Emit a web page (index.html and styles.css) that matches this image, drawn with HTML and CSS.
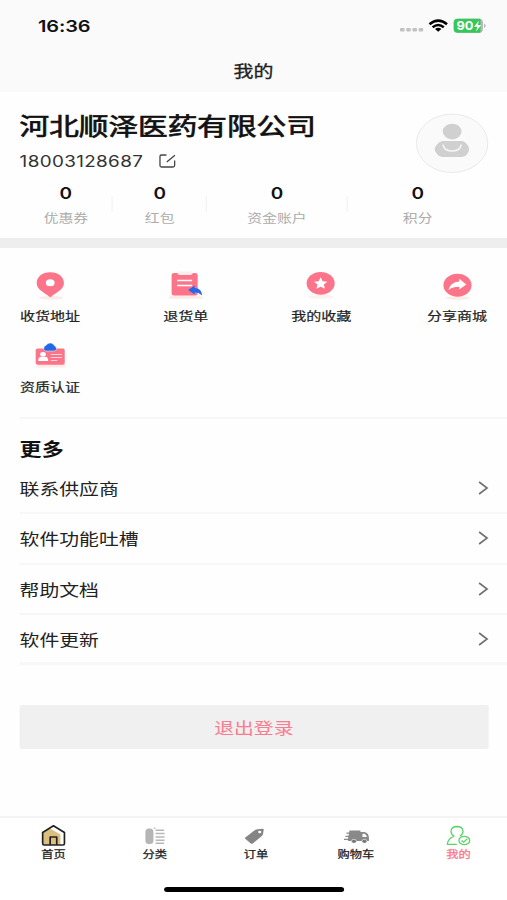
FILE: index.html
```html
<!DOCTYPE html>
<html lang="zh-CN">
<head>
<meta charset="utf-8">
<title>我的</title>
<link rel="stylesheet" href="styles.css">
</head>
<body>
<div class="app">
  <header class="top">
    <div class="status">
      <span class="time">16:36</span>
      <svg class="status-icons" viewBox="398 16 90 20" preserveAspectRatio="none">
        <g fill="#c2c2c4"><rect x="400" y="28" width="4.600" height="3.600" rx="1"/><rect x="406.200" y="28" width="4.600" height="3.600" rx="1"/><rect x="412.400" y="28" width="4.600" height="3.600" rx="1"/><rect x="418.600" y="28" width="4.600" height="3.600" rx="1"/></g>
        <g fill="none" stroke="#000" stroke-width="2.500"><path d="M429.500 24.200Q438.200 17 447 24.200"/><path d="M432.600 27.200Q438.200 22.700 443.800 27.200"/></g>
        <path d="M435 29Q438.200 26.600 441.400 29L438.200 31.800Z"/>
        <rect x="453.700" y="18.800" width="29.300" height="14" rx="4" fill="#b9b9bb"/>
        <path d="M457.700 18.800H480.500V32.800H457.700A4 4 0 0 1 453.700 28.800V22.800A4 4 0 0 1 457.700 18.800Z" fill="#34c759"/>
        <path d="M484 23.500Q487.500 25.800 484 28Z" fill="#b9b9bb"/>
        <text x="456.500" y="30" class="battery-text" textLength="17" lengthAdjust="spacingAndGlyphs">90</text>
        <path d="M479 20.500L474 26.800H477.300L476 31.500L481.200 25H477.800Z" fill="#fff"/>
      </svg>
    </div>
    <h1 class="title">我的</h1>
  </header>

  <section class="profile">
    <div class="identity">
      <div>
        <h2 class="company">河北顺泽医药有限公司</h2>
        <div class="phone"><span>18003128687</span>
          <svg class="edit" viewBox="158 153 20 16" preserveAspectRatio="none" fill="none" stroke="#444" stroke-width="1.300"><path d="M166.500 155H161.500Q160 155 160 156.500V165.500Q160 167 161.500 167H173Q174.700 167 174.700 165.500V160.500M166.800 162L175 155.200"/></svg>
        </div>
      </div>
      <svg class="avatar" viewBox="415 113 74 61" preserveAspectRatio="none"><ellipse cx="452" cy="143.300" rx="35.700" ry="29.200" fill="#fafafa" stroke="#e9e9e9"/><g fill="#d0d0d0"><ellipse cx="452" cy="131.600" rx="9.400" ry="7.800"/><path d="M442 141H462Q465 141.500 467.500 145Q470.500 149 467.500 153.500Q465 157 461 157H443Q439 157 436.500 153.500Q432.500 149 436.500 145Q439 141.500 442 141Z"/></g><path d="M442.800 144.500Q444 151 452 151Q460 151 461.200 144.500" fill="none" stroke="#f5f5f5" stroke-width="1.500"/></svg>
    </div>
    <div class="stats">
      <div class="stat"><b>0</b><span>优惠券</span></div>
      <div class="stat"><b>0</b><span>红包</span></div>
      <div class="stat wide"><b>0</b><span>资金账户</span></div>
      <div class="stat wide"><b>0</b><span>积分</span></div>
    </div>
  </section>

  <section class="services">
    <div class="service">
      <svg viewBox="28 270 44 32" preserveAspectRatio="none"><ellipse cx="50.500" cy="297.800" rx="12" ry="1.700" fill="#fdebe5"/><path d="M50 272.300C58 272.300 63.700 277 63.700 283C63.700 290 55 293 50.800 296.700Q50 297.300 49.200 296.700C45 293 36.500 290 36.500 283C36.500 277 42 272.300 50 272.300Z" fill="#fc7489"/><ellipse cx="50" cy="282.800" rx="4.400" ry="3.500" fill="#fff"/></svg>
      <span>收货地址</span>
    </div>
    <div class="service">
      <svg viewBox="163.500 270 44 32" preserveAspectRatio="none"><path d="M169 295.500H199L203.500 298.700H168Z" fill="#fdebe5"/><rect x="171" y="273" width="26" height="22.500" rx="2.500" fill="#fc7489"/><path d="M177 271.500H192V273.500Q191.500 275 189.500 275H179.500Q177.500 275 177 273.500Z" fill="#fdeeee"/><path d="M176.500 280.500H191.500M176.500 285.500H191.500" stroke="#fff" stroke-width="1.700"/><path d="M187.500 290L194 285.500V288Q201 288 201.500 295.500Q198 292.200 194 292.200V294.500Z" fill="#2468ea"/></svg>
      <span>退货单</span>
    </div>
    <div class="service">
      <svg viewBox="299 270 44 32" preserveAspectRatio="none"><ellipse cx="321" cy="296.800" rx="13" ry="1.700" fill="#fdf0ed"/><ellipse cx="320.800" cy="283.300" rx="14" ry="11.400" fill="#fc7489"/><path d="M320.800 277.300L322.800 281.200L327.500 281.700L324 284.500L325 288.800L320.800 286.700L316.600 288.800L317.600 284.500L314.100 281.700L318.800 281.200Z" fill="#fff"/></svg>
      <span>我的收藏</span>
    </div>
    <div class="service">
      <svg viewBox="435 270 44 32" preserveAspectRatio="none"><ellipse cx="458" cy="298" rx="12" ry="1.700" fill="#fdebe5"/><ellipse cx="457.700" cy="285.200" rx="14" ry="11.500" fill="#fc7489"/><path d="M448.500 290Q450.500 282 459.500 281.500V278.800L466.500 284.500L459.500 289.500V286.700Q453.500 286.500 448.500 290Z" fill="#fff"/></svg>
      <span>分享商城</span>
    </div>
    <div class="service">
      <svg viewBox="28 341 44 32" preserveAspectRatio="none"><path d="M39 364H65V367.500H36Z" fill="#fdebe5"/><rect x="35.500" y="348.500" width="29" height="16.300" rx="2" fill="#fc7489"/><path d="M46 351Q42.500 351 44 346.500Q46 345.500 47 344Q50 341.800 53 344Q54 345.500 56 347.500Q57 350.500 54 351Z" fill="#2468ea" stroke="#fff" stroke-width=".5"/><ellipse cx="42.800" cy="354.200" rx="2.800" ry="2.300" fill="#fff"/><path d="M38 361Q38 356.800 41 356.800H45Q48 356.800 48 361Z" fill="#fff"/><path d="M50.500 354.500H61.500M50.500 357.500H61.500M50.500 360.500H57" stroke="#ffd4dc" stroke-width="1.200"/></svg>
      <span>资质认证</span>
    </div>
  </section>

  <section class="more">
    <h3>更多</h3>
    <ul class="menu">
      <li><span>联系供应商</span><svg viewBox="0 0 12 16" preserveAspectRatio="none"><path d="M1.500 2L9.500 8L1.500 14"/></svg></li>
      <li><span>软件功能吐槽</span><svg viewBox="0 0 12 16" preserveAspectRatio="none"><path d="M1.500 2L9.500 8L1.500 14"/></svg></li>
      <li><span>帮助文档</span><svg viewBox="0 0 12 16" preserveAspectRatio="none"><path d="M1.500 2L9.500 8L1.500 14"/></svg></li>
      <li><span>软件更新</span><svg viewBox="0 0 12 16" preserveAspectRatio="none"><path d="M1.500 2L9.500 8L1.500 14"/></svg></li>
    </ul>
  </section>

  <button class="logout">退出登录</button>

  <footer class="bottom">
    <nav class="tabs">
      <a class="tab"><svg viewBox="38 823 31 24" preserveAspectRatio="none"><path d="M42.500 832.500L53.500 825.800L64.500 832.500V845H42.500Z" fill="#fff"/><path d="M43 833L50 828.500L60.500 834.500V845H43Z" fill="#dcbf7e"/><path d="M53.500 825.800L42.700 832.500V843.500Q42.700 845 44.200 845H63Q64.500 845 64.500 843.500V832.500ZM50.200 845V837H56.800V845" fill="none" stroke="#222" stroke-width="1.700" stroke-linejoin="round"/></svg><span>首页</span></a>
      <a class="tab"><svg viewBox="139.500 823 31 24" preserveAspectRatio="none"><rect x="145.300" y="828.500" width="8" height="15.500" rx="3.500" fill="#b5b5b5"/><path d="M155.500 830.300H164M155.500 833.600H164.500M155.500 836.900H164.500M155.500 840.200H164.500M155.500 843.300H164" stroke="#b8b8b8" stroke-width="1.500"/><circle cx="154.700" cy="828.300" r=".8" fill="#aaa"/></svg><span>分类</span></a>
      <a class="tab"><svg viewBox="241 823 31 24" preserveAspectRatio="none"><path d="M246.300 837.500L256 830Q257 829.300 259 829.200L263.500 828.700Q265 828.700 264.700 830L264 834Q263.700 835.300 262.500 836.200L254 843.200Q252.800 844.200 251.500 843.200L246.500 839Q245.500 838.200 246.300 837.500Z" fill="#858585"/><ellipse cx="260.700" cy="832" rx="1.600" ry="1.300" fill="#fff"/></svg><span>订单</span></a>
      <a class="tab cart"><svg viewBox="341 823 31 24" preserveAspectRatio="none"><path d="M350 830.500H361V832H365Q369.500 833 369.500 838V841H349Q348 841 348.500 839Z" fill="#898989"/><path d="M347 833.200H351M346 836.300H350M344.500 839.400H350" stroke="#898989" stroke-width="1.200"/><path d="M363 833.700H365Q367 834.500 367.500 837H363Z" fill="#fff"/><g fill="#777" stroke="#fff" stroke-width=".6"><ellipse cx="354.500" cy="841.300" rx="2.500" ry="2"/><ellipse cx="365" cy="841.300" rx="2.500" ry="2"/></g></svg><span>购物车</span></a>
      <a class="tab active"><svg viewBox="443 823 31 24" preserveAspectRatio="none" fill="none" stroke="#5bd267" stroke-width="1.300"><path d="M454 836.200Q450.700 834.300 450.700 831.200Q451 826.600 456.700 826.500Q462.500 826.600 462.700 831.200Q462.500 834.500 459.500 836M454 836.200Q447.500 838.500 447 844.300H456.500"/><ellipse cx="464" cy="840.500" rx="5.400" ry="4.200"/><path d="M461.200 840.500L463.400 842.200L467 838.700"/></svg><span>我的</span></a>
    </nav>
    <div class="home-bar"></div>
  </footer>
</div>
</body>
</html>
```
FILE: styles.css
```css
* { box-sizing: border-box; margin: 0; padding: 0; }

body {
  width: 507px;
  height: 900px;
  overflow: hidden;
  background: #fff;
}

/* A 414px layout stretched to the 507px viewport */
.app {
  width: 414px;
  height: 900px;
  display: flex;
  flex-direction: column;
  transform: scaleX(1.22464);
  transform-origin: 0 0;
  font-family: "Inter", "Noto Sans CJK SC", sans-serif;
  color: #222;
  background: #fefefe;
}

svg { display: block; flex: none; }

.top { height: 92px; background: #fafafa; }
.status {
  height: 50px;
  display: flex;
  justify-content: space-between;
  align-items: center;
  padding: 2px 15.500px 0 31px;
}
.time { font-size: 16.300px; font-weight: 600; letter-spacing: -0.1px; color: #111; }
.status-icons { width: 73.500px; height: 20px; }
.battery-text { font: 700 12px "Inter", sans-serif; fill: #fff; }
.title {
  height: 42px;
  line-height: 42px;
  text-align: center;
  font-size: 16.300px;
  font-weight: 400;
  -webkit-text-stroke: 0.3px currentColor;
}

.profile { height: 156px; border-bottom: 10px solid #eee; }
.identity {
  height: 92px;
  display: flex;
  justify-content: space-between;
  padding: 17px 15px 0 16px;
}
.company {
  font-size: 24.200px;
  line-height: 36px;
  font-weight: 400;
  color: #111;
  white-space: nowrap;
  -webkit-text-stroke: 0.7px currentColor;
}
.phone {
  display: flex;
  align-items: center;
  gap: 12px;
  height: 32px;
  font-size: 15.400px;
  letter-spacing: 0.3px;
  color: #333;
}
.edit { width: 16.300px; height: 16px; }
.avatar { width: 60.400px; height: 61px; margin-top: 4px; }

.stats { display: flex; padding: 0 15.500px 0 15.500px; }
.stat {
  position: relative;
  flex: 1;
  display: flex;
  flex-direction: column;
  align-items: center;
}
.stat.wide { flex: 1.500; }
.stat b { height: 20px; line-height: 20px; font-size: 15.500px; font-weight: 600; color: #111; }
.stat span { margin-top: 5px; line-height: 20px; font-size: 12.100px; color: #acacac; }
.stat + .stat::before {
  content: "";
  position: absolute;
  left: -1px;
  top: 12px;
  width: 1px;
  height: 16px;
  background: #f3f3f3;
}

.services {
  height: 171px;
  margin-left: 16px;
  padding: 22px 16px 0 0;
  display: grid;
  grid-template-columns: repeat(4, 49.600px);
  grid-auto-rows: 71px;
  justify-content: space-between;
  border-bottom: 2px solid #f6f6f6;
}
.service { display: flex; flex-direction: column; align-items: center; }
.service svg { width: 36px; height: 32px; }
.service span {
  margin-top: 5px;
  line-height: 20px;
  font-size: 12.250px;
  white-space: nowrap;
  -webkit-text-stroke: 0.2px currentColor;
}

.more { margin-left: 16px; }
.more h3 { height: 45px; line-height: 20px; padding-top: 21px; font-size: 18px; font-weight: 700; color: #111; }
.menu { list-style: none; }
.menu li {
  height: 50.300px;
  display: flex;
  align-items: center;
  justify-content: space-between;
  padding-right: 14px;
  border-bottom: 2px solid #f7f7f7;
  font-size: 16.200px;
}
.menu li:last-child { border-bottom-width: 3px; }
.menu svg { width: 9.800px; height: 16px; fill: none; stroke: #707070; stroke-width: 1.600; }

.logout {
  margin: 40px 15px 0 15.500px;
  height: 44px;
  border: 0;
  border-radius: 2px;
  background: #f0f0f0;
  color: #fa7c90;
  font: 400 16.200px "Noto Sans CJK SC", sans-serif;
}

.bottom { margin-top: auto; height: 84px; border-top: 2px solid #f3f3f3; background: #fff; }
.tabs { display: flex; justify-content: space-between; height: 69px; padding: 5px 27px 0 31px; }
.tab { display: flex; flex-direction: column; align-items: center; width: 25.300px; }
.tab.cart { margin: 0 1px 0 -1px; }
.tab svg { width: 25.300px; height: 24px; }
.tab span { line-height: 14px; font-size: 10px; white-space: nowrap; -webkit-text-stroke: 0.25px currentColor; }
.tab.active span { color: #fc7489; }
.home-bar { width: 147px; height: 5px; margin: 0 auto; border-radius: 3px; background: #000; }
```
